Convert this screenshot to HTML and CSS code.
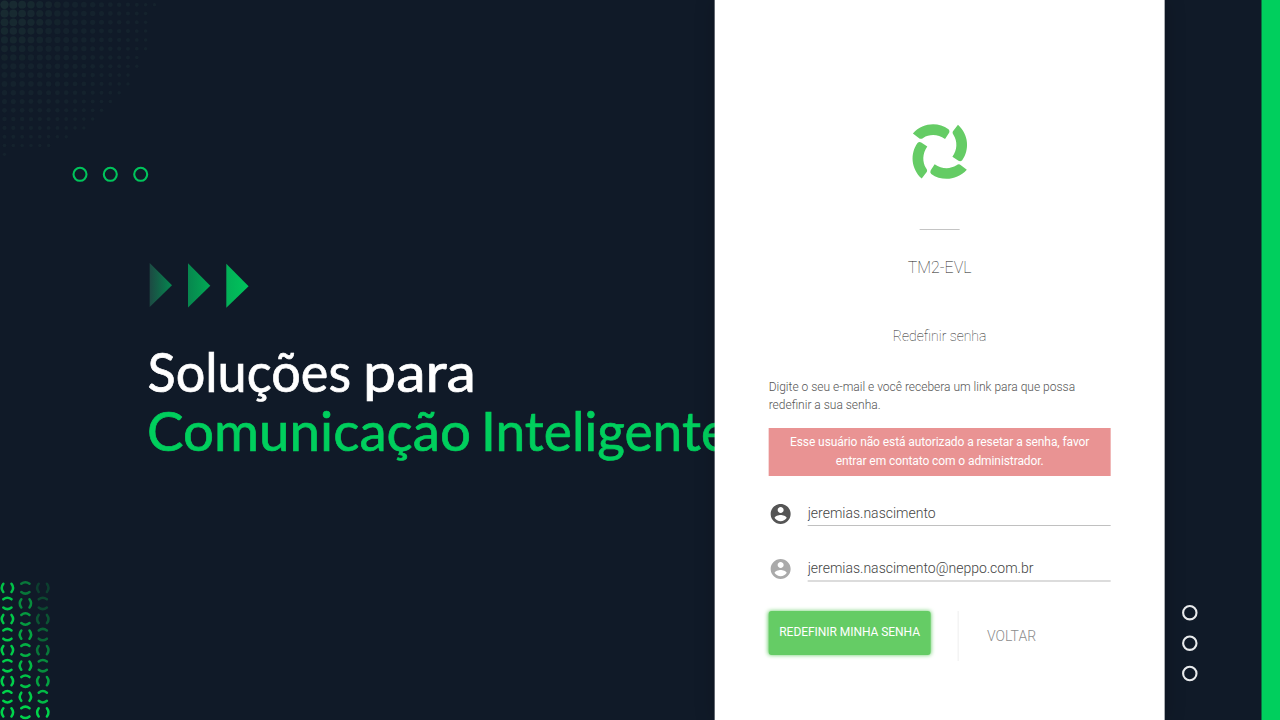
FILE: index.html
```html
<!DOCTYPE html>
<html lang="pt-BR">
<head>
<meta charset="utf-8">
<title>Redefinir senha</title>
<link rel="stylesheet" href="styles.css">
</head>
<body>
<svg class="artwork" width="1280" height="720" viewBox="0 0 1280 720" aria-hidden="true">
  <defs>
    <linearGradient id="fade1"><stop offset="0" stop-color="#1d4943"/><stop offset="1" stop-color="#04884f"/></linearGradient>
    <linearGradient id="fade2"><stop offset="0" stop-color="#07864e"/><stop offset="1" stop-color="#02aa55"/></linearGradient>
    <linearGradient id="fade3"><stop offset="0" stop-color="#03af57"/><stop offset="1" stop-color="#00c55c"/></linearGradient>
  </defs>
  <g id="halftone" fill="#1b3034"></g>
  <g id="links" fill="none" stroke="#00d44b" stroke-width="2.5" stroke-linecap="round"></g>
  <g fill="none" stroke="#00c45b" stroke-width="2.1">
    <circle cx="80" cy="174.3" r="6.5"/><circle cx="110.3" cy="174.3" r="6.5"/><circle cx="140.7" cy="174.3" r="6.5"/>
  </g>
  <path d="M149.7 263 172 285.200 149.700 307z" fill="url(#fade1)"/>
  <path d="M188 263.300 210.300 285.700 188 307.500z" fill="url(#fade2)"/>
  <path d="M226.300 263.800 248.600 286.300 226.300 307.800z" fill="url(#fade3)"/>
  <g class="headline">
    <text class="headline-top" x="147.500" y="392" textLength="203.500" lengthAdjust="spacingAndGlyphs">Soluções</text>
    <text class="headline-top" x="363" y="392" textLength="113" lengthAdjust="spacingAndGlyphs">para</text>
    <text class="headline-accent" x="147" y="451" textLength="324" lengthAdjust="spacingAndGlyphs">Comunicação</text>
    <text class="headline-accent" x="481" y="451" textLength="248" lengthAdjust="spacingAndGlyphs">Inteligente</text>
  </g>
  <g fill="none" stroke="#e9ebed" stroke-width="2.1">
    <circle cx="1189.800" cy="612.700" r="6.700"/><circle cx="1189.800" cy="643.200" r="6.700"/><circle cx="1189.800" cy="673.500" r="6.700"/>
  </g>
  <rect x="1261.500" y="0" width="18.500" height="720" fill="#00cf5d"/>
</svg>

<main class="panel">
  <svg class="logo" width="60" height="60" viewBox="-30 -30 60 60" aria-label="Logo">
    <g fill="#65cc65" transform="translate(.2 -.4) scale(.98)">
      <path id="blade" d="M-27.500 -18.500C-17.500 -29.500 -2 -30.500 8.800 -22.800Q10.500 -21 9.300 -19L5.300 -12.800C-2 -18 -10.500 -18 -17 -14Q-19.500 -12 -21.500 -14z"/>
      <use href="#blade" transform="rotate(90)"/>
      <use href="#blade" transform="rotate(180)"/>
      <use href="#blade" transform="rotate(270)"/>
    </g>
  </svg>
  <hr class="divider">
  <h1 class="tenant">TM2-EVL</h1>
  <h2 class="title">Redefinir senha</h2>
  <form class="form">
    <p class="hint">Digite o seu e-mail e você recebera um link para que possa redefinir a sua senha.</p>
    <div class="alert">Esse usuário não está autorizado a resetar a senha, favor entrar em contato com o administrador.</div>
    <label class="field">
      <svg class="field-icon" viewBox="0 0 24 24"><path d="M12 2C6.480 2 2 6.480 2 12s4.480 10 10 10 10-4.480 10-10S17.520 2 12 2zm0 3c1.660 0 3 1.340 3 3s-1.340 3-3 3-3-1.340-3-3 1.340-3 3-3zm0 14.200c-2.500 0-4.710-1.280-6-3.220.030-1.990 4-3.080 6-3.080 1.990 0 5.970 1.090 6 3.080-1.290 1.940-3.500 3.220-6 3.220z"/></svg>
      <input class="input" type="text" value="jeremias.nascimento">
    </label>
    <label class="field field-second">
      <svg class="field-icon" viewBox="0 0 24 24"><path d="M12 2C6.480 2 2 6.480 2 12s4.480 10 10 10 10-4.480 10-10S17.520 2 12 2zm0 3c1.660 0 3 1.340 3 3s-1.340 3-3 3-3-1.340-3-3 1.340-3 3-3zm0 14.200c-2.500 0-4.710-1.280-6-3.220.030-1.990 4-3.080 6-3.080 1.990 0 5.970 1.090 6 3.080-1.290 1.940-3.500 3.220-6 3.220z"/></svg>
      <input class="input" type="text" value="jeremias.nascimento@neppo.com.br">
    </label>
    <div class="actions">
      <button class="submit" type="button">REDEFINIR MINHA SENHA</button>
      <span class="separator"></span>
      <a class="back">VOLTAR</a>
    </div>
  </form>
</main>
<script src="art.js"></script>
</body>
</html>
```
FILE: styles.css
```css
* { box-sizing: border-box; }
body {
  margin: 0;
  width: 1280px;
  height: 720px;
  overflow: hidden;
  background: #101a28;
  font-family: Roboto, sans-serif;
  font-weight: 300;
  color: #555;
}
/* Full-window backdrop behind the panel */
.artwork { position: absolute; inset: 0; }
.headline { font-family: Lato, sans-serif; font-size: 55px; font-weight: 400; stroke-width: .7px; }
.headline-top { fill: #fff; stroke: #fff; }
.headline-accent { fill: #00cf5d; stroke: #00cf5d; }
.panel {
  position: relative;
  width: 450px;
  height: 720px;
  margin-left: 715px;
  transform: translateX(-.35px);
  padding: 122px 54px 0;
  background: #fff;
  box-shadow: 0 0 20px rgba(0, 0, 0, .2);
  display: flex;
  flex-direction: column;
  align-items: center;
}
.logo { display: block; }
.divider { width: 40px; height: 1px; margin: 47px 0 0; border: 0; background: #c4c4c4; }
.tenant { margin: 28px 0 0; font-size: 16px; line-height: 20px; font-weight: 100; color: #222; }
.title { margin: 48px 0 0; font-size: 14px; line-height: 20px; font-weight: 100; color: #222; }
.form { width: 342px; margin-top: 32px; }
.hint { margin: 0; font-size: 12px; line-height: 18px; }
.alert {
  height: 48px;
  margin-top: 14px;
  padding: 5px 16px;
  background: #e99393;
  color: #fff;
  font-size: 12px;
  font-weight: 400;
  letter-spacing: -.09px;
  line-height: 19px;
  text-align: center;
}
.field { display: flex; align-items: center; gap: 15px; margin-top: 25px; height: 26px; }
.field-second { margin-top: 29px; }
.field-icon { width: 24px; height: 24px; fill: #555; }
.field-second .field-icon { fill: #aaa; }
.input {
  flex: 1;
  min-width: 0;
  height: 25px;
  margin-bottom: 1px;
  padding: 0 0 1px;
  border: 0;
  border-bottom: 1px solid #c0c0c0;
  background: transparent;
  color: #444;
  font: 300 14px Roboto, sans-serif;
  outline: 0;
}
.field-second .input { border-bottom: 2px solid #dcdcdc; height: 26px; margin-bottom: 0; padding: 0; }
.actions { display: flex; margin-top: 29px; }
.submit {
  width: 162px;
  height: 44px;
  padding: 0 0 3px;
  border: 0;
  border-radius: 3px;
  background: #65cc65;
  box-shadow: 0 0 4px #65cc65;
  color: #fff;
  font: 400 12px Roboto, sans-serif;
  letter-spacing: -.05px;
  white-space: nowrap;
}
.separator { width: 1px; height: 50px; margin-left: 27.400px; background: #eee; }
.back { margin: 15px 0 0 28px; font-size: 14px; line-height: 20px; color: #8c8c8c; }
```
FILE: art.js
```js
const SVG_NS = "http://www.w3.org/2000/svg";

function add(parent, tag, attributes) {
  const node = document.createElementNS(SVG_NS, tag);
  for (const name in attributes) node.setAttribute(name, attributes[name]);
  parent.appendChild(node);
}

// Halftone corner: dots shrink and fade away from the origin.
const rowLengths = [18, 17, 17, 17, 17, 17, 16, 16, 15, 15, 14, 13, 12, 11, 10, 8, 6, 1];
const halftone = document.getElementById("halftone");
rowLengths.forEach((count, row) => {
  for (let col = 0; col < count; col++) {
    const distance = Math.hypot(row, col);
    add(halftone, "circle", {
      cx: 4.5 + col * 8.82,
      cy: 4.7 + row * 8.8,
      r: Math.max(1.3, 4.200 - distance * 0.150),
      opacity: Math.max(0.400, 0.850 - distance * 0.070)
    });
  }
});

// Chain texture: alternating vertical and horizontal pairs of arcs.
const links = document.getElementById("links");
[7.4, 25.4, 42.8].forEach((x, col) => {
  for (let row = 0; row < 9; row++) {
    const startOpacity = [0.9, 0.5, 0.200][col];
    add(links, "path", {
      d: "M-4.1 -4.1Q-7.300 0 -4.100 4.100M4.100 -4.100Q7.300 0 4.100 4.100",
      transform: `translate(${x} ${587.900 + row * 15.550}) rotate(${(row + col) % 2 * 90})`,
      opacity: Math.min(1, startOpacity + (1 - startOpacity) * Math.pow(row / 8, col === 2 ? 1.4 : 0.7))
    });
  }
});
```
